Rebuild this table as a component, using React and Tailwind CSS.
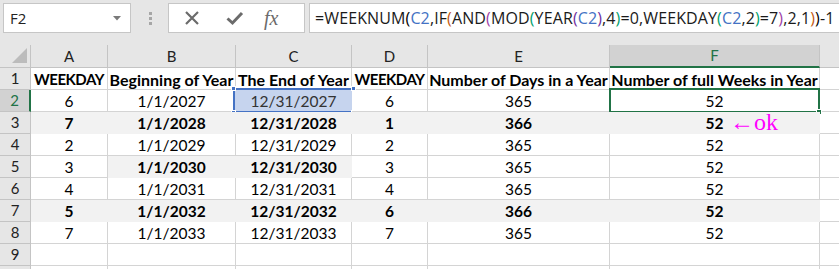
import React from "react";

const COLS = [
  { key: "A", w: "w-[77px]" },
  { key: "B", w: "w-[128px]" },
  { key: "C", w: "w-[116px]" },
  { key: "D", w: "w-[76px]" },
  { key: "E", w: "w-[182px]" },
  { key: "F", w: "w-[210px]" },
];

const ROWS = [
  { n: 1, v: ["WEEKDAY", "Beginning of Year", "The End of Year", "WEEKDAY", "Number of Days in a Year", "Number of full Weeks in Year"], bold: [1, 1, 1, 1, 1, 1], fill: [0, 0, 0, 0, 0, 0] },
  { n: 2, v: ["6", "1/1/2027", "12/31/2027", "6", "365", "52"], bold: [0, 0, 0, 0, 0, 0], fill: [0, 0, 0, 0, 0, 0] },
  { n: 3, v: ["7", "1/1/2028", "12/31/2028", "1", "366", "52"], bold: [1, 1, 1, 1, 1, 1], fill: [1, 1, 1, 1, 1, 1] },
  { n: 4, v: ["2", "1/1/2029", "12/31/2029", "2", "365", "52"], bold: [0, 0, 0, 0, 0, 0], fill: [0, 0, 0, 0, 0, 0] },
  { n: 5, v: ["3", "1/1/2030", "12/31/2030", "3", "365", "52"], bold: [0, 1, 1, 0, 0, 0], fill: [0, 1, 1, 0, 0, 0] },
  { n: 6, v: ["4", "1/1/2031", "12/31/2031", "4", "365", "52"], bold: [0, 0, 0, 0, 0, 0], fill: [0, 0, 0, 0, 0, 0] },
  { n: 7, v: ["5", "1/1/2032", "12/31/2032", "6", "366", "52"], bold: [1, 1, 1, 1, 1, 1], fill: [1, 1, 1, 1, 1, 1] },
  { n: 8, v: ["7", "1/1/2033", "12/31/2033", "7", "365", "52"], bold: [0, 0, 0, 0, 0, 0], fill: [0, 0, 0, 0, 0, 0] },
  { n: 9, v: ["", "", "", "", "", ""], bold: [0, 0, 0, 0, 0, 0], fill: [0, 0, 0, 0, 0, 0] },
  { n: 10, v: ["", "", "", "", "", ""], bold: [0, 0, 0, 0, 0, 0], fill: [0, 0, 0, 0, 0, 0] },
];

const REF = "text-[#4472c4]";
const P1 = "text-black";
const P2 = "text-[#c55a11]";
const P3 = "text-[#9e3fa8]";
const P4 = "text-[#00a06b]";
const P5 = "text-[#7030a0]";

const FORMULA = [
  ["=WEEKNUM", ""], ["(", P1], ["C2", REF], [",IF", ""], ["(", P2], ["AND", ""], ["(", P3], ["MOD", ""], ["(", P4],
  ["YEAR", ""], ["(", P5], ["C2", REF], [")", P5], [",4", ""], [")", P4], ["=0,WEEKDAY", ""], ["(", P4], ["C2", REF],
  [",2", ""], [")", P4], ["=7", ""], [")", P3], [",2,1", ""], [")", P2], [")", P1], ["-1", ""],
];

function Handle({ cls }) {
  return <div className={`absolute w-[5px] h-[5px] bg-[#4472c4] border border-white ${cls}`} />;
}

function textSize(r, v) {
  if (r.n !== 1) return "text-[15.5px]";
  if (v === "WEEKDAY") return "text-[15px] tracking-[-0.5px]";
  return "text-[16px]";
}

export default function App() {
  return (
    <div className="w-[839px] h-[269px] overflow-hidden bg-white font-['Lato',sans-serif] text-black">
      {/* Formula bar area */}
      <div className="h-[45px] bg-[#e6e6e6] flex items-start pt-[3px] pl-[3px]">
        <div className="w-[128px] h-[30px] bg-white border border-[#c6c6c6] flex items-center justify-between pl-[6px] pr-[9px]">
          <span className="text-[15px] font-['Open_Sans',sans-serif] text-[#222]">F2</span>
          <svg width="8" height="5" viewBox="0 0 8 5"><path d="M0 0 L8 0 L4 4.5 Z" fill="#7a7a7a" /></svg>
        </div>
        <div className="w-[37px] h-[30px] flex flex-col items-center justify-center gap-[2px] pl-[2px]">
          <div className="w-[3px] h-[3px] bg-[#a6a6a6]" />
          <div className="w-[3px] h-[3px] bg-[#a6a6a6]" />
          <div className="w-[3px] h-[3px] bg-[#a6a6a6]" />
        </div>
        <div className="w-[137px] h-[30px] bg-white border border-[#c6c6c6] flex items-center pl-[15px]">
          <svg width="16" height="16" viewBox="0 0 16 16">
            <path d="M2 2 L14 14 M14 2 L2 14" stroke="#6b6b6b" strokeWidth="2.2" />
          </svg>
          <svg width="18" height="16" viewBox="0 0 18 16" className="ml-[26px]">
            <path d="M1.5 8.5 L6.5 13 L16 3" stroke="#6b6b6b" strokeWidth="3" fill="none" />
          </svg>
          <span className="ml-[20px] font-['Liberation_Serif',serif] italic text-[20px] text-[#6b6b6b] leading-none">fx</span>
        </div>
        <div className="ml-[4px] flex-1 h-[30px] bg-white border border-[#c6c6c6] border-r-0 flex items-center pl-[5px] whitespace-nowrap overflow-hidden">
          <span className="text-[16px] font-['Open_Sans',sans-serif] tracking-[0.12px] text-[#1a1a1a]">
            {FORMULA.map(([t, c], i) => (
              <span key={i} className={c}>{t}</span>
            ))}
          </span>
        </div>
      </div>

      {/* Column headers */}
      <div className="flex h-[23px] bg-[#e6e6e6]">
        <div className="w-[31px] h-[23px] border-r border-b border-[#c4c4c4] relative">
          <svg width="16" height="16" viewBox="0 0 16 16" className="absolute left-[12px] top-[3px]">
            <path d="M15 0 L15 15 L0 15 Z" fill="#bcbcbc" />
          </svg>
        </div>
        {COLS.map((c) => (
          <div
            key={c.key}
            className={`${c.w} h-[23px] flex items-center justify-center text-[15px] border-r border-[#c4c4c4] ${
              c.key === "F" ? "bg-[#d2d2d2] text-[#217346] border-b-2 border-b-[#217346]" : "border-b border-b-[#c4c4c4] text-[#222]"
            }`}
          >
            {c.key}
          </div>
        ))}
        <div className="flex-1 h-[23px] border-b border-[#c4c4c4]" />
      </div>

      {/* Rows */}
      {ROWS.map((r) => (
        <div key={r.n} className="flex h-[22px]">
          <div
            className={`w-[31px] h-[22px] flex items-center justify-center text-[15px] border-b border-[#c4c4c4] ${
              r.n === 2 ? "bg-[#d2d2d2] text-[#217346] border-r-2 border-r-[#217346]" : "bg-[#e6e6e6] text-[#222] border-r border-r-[#c4c4c4]"
            }`}
          >
            {r.n < 10 ? r.n : ""}
          </div>
          {COLS.map((c, i) => {
            const filled = r.fill[i];
            const bold = r.bold[i];
            const isC2 = r.n === 2 && c.key === "C";
            const isF2 = r.n === 2 && c.key === "F";
            const isF3 = r.n === 3 && c.key === "F";
            return (
              <div
                key={c.key}
                className={`${c.w} h-[22px] relative flex items-center justify-center pt-[2px] whitespace-nowrap border-r border-b ${textSize(r, r.v[i])} ${
                  filled ? "bg-[#f2f2f2] border-[#f2f2f2]" : "bg-white border-[#d4d4d4]"
                } ${bold ? "font-bold" : ""} ${isC2 ? "text-[#333]" : ""}`}
              >
                {isC2 && (
                  <div className="absolute left-[-3px] top-[-2px] w-[121px] h-[25px] bg-[#c6d4ee] border-2 border-[#4472c4]">
                    <Handle cls="left-[-4px] top-[-4px]" />
                    <Handle cls="right-[-4px] top-[-4px]" />
                    <Handle cls="left-[-4px] bottom-[-4px]" />
                    <Handle cls="right-[-4px] bottom-[-4px]" />
                  </div>
                )}
                {isF2 && (
                  <div className="absolute left-[-1px] top-[-2px] w-[211px] h-[25px] border-2 border-[#217346]">
                    <div className="absolute right-[-4px] bottom-[-4px] w-[6px] h-[6px] bg-[#217346] border border-white" />
                  </div>
                )}
                <span className="relative">{r.v[i]}</span>
                {isF3 && (
                  <span className="absolute left-[120px] top-[-8px] font-['Liberation_Serif',serif] text-[24px] text-[#ff00ff] font-normal">
                    ←ok
                  </span>
                )}
              </div>
            );
          })}
          <div className="flex-1 h-[22px] border-b border-[#d4d4d4] bg-white" />
        </div>
      ))}
    </div>
  );
}
